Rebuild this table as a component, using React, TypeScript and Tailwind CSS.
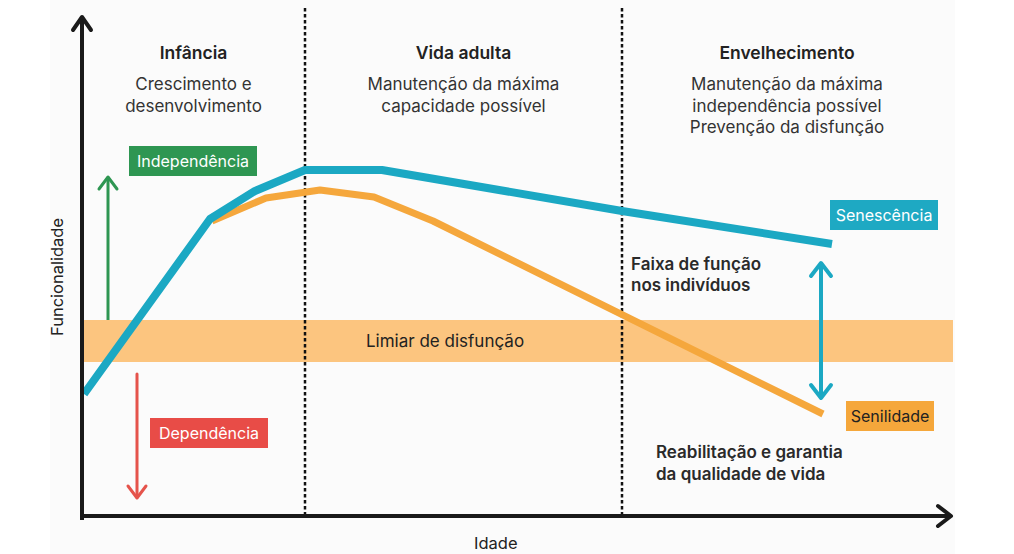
import React from 'react';

// Curva de funcionalidade ao longo da vida
const blueLine = '84,394 210,219 255,191 305,170 382,170 622,211 832,244';
const orangeLine = '212,221 266,198 320,190 374,197 433,221 823,414';

function Chart() {
  return (
    <svg className="absolute left-0 top-0" width={1014} height={554} viewBox="0 0 1014 554">
      {/* faixa limiar */}
      <rect x={84} y={320} width={869} height={42} fill="#fcc57f" />

      {/* linhas tracejadas */}
      <line x1={305} y1={8} x2={305} y2={516} stroke="#111" strokeWidth={2.5} strokeDasharray="3.5 2.5" />
      <line x1={622} y1={8} x2={622} y2={516} stroke="#111" strokeWidth={2.5} strokeDasharray="3.5 2.5" />

      {/* curvas */}
      <polyline points={orangeLine} fill="none" stroke="#f5a73c" strokeWidth={7} strokeLinejoin="round" />
      <polyline points={blueLine} fill="none" stroke="#1ba8c3" strokeWidth={8} strokeLinejoin="round" />

      {/* eixos */}
      <line x1={82} y1={18} x2={82} y2={520} stroke="#1a1a1a" strokeWidth={4} />
      <polyline points="73,30 82,17 91,30" fill="none" stroke="#1a1a1a" strokeWidth={4} strokeLinecap="round" strokeLinejoin="round" />
      <line x1={80} y1={516} x2={949} y2={516} stroke="#1a1a1a" strokeWidth={4} />
      <polyline points="938,506 951,516 938,526" fill="none" stroke="#1a1a1a" strokeWidth={4} strokeLinecap="round" strokeLinejoin="round" />

      {/* seta independência */}
      <line x1={108} y1={178} x2={108} y2={320} stroke="#2e9652" strokeWidth={3} />
      <polyline points="99,189 108,177 117,189" fill="none" stroke="#2e9652" strokeWidth={3} strokeLinecap="round" strokeLinejoin="round" />

      {/* seta dependência */}
      <line x1={137} y1={374} x2={137} y2={497} stroke="#e5534b" strokeWidth={3} strokeLinecap="round" />
      <polyline points="128,486 137,498 146,486" fill="none" stroke="#e5534b" strokeWidth={3} strokeLinecap="round" strokeLinejoin="round" />

      {/* seta dupla faixa de função */}
      <line x1={821} y1={265} x2={821} y2={395} stroke="#1ba8c3" strokeWidth={4} />
      <polyline points="811,276 821,263 831,276" fill="none" stroke="#1ba8c3" strokeWidth={4} strokeLinecap="round" strokeLinejoin="round" />
      <polyline points="811,385 821,398 831,385" fill="none" stroke="#1ba8c3" strokeWidth={4} strokeLinecap="round" strokeLinejoin="round" />
    </svg>
  );
}

function Tag({ className, children }: { className: string; children: React.ReactNode }) {
  return (
    <div className={`absolute flex items-center justify-center text-[16px] leading-none ${className}`}>
      {children}
    </div>
  );
}

function Phase({ title, lines }: { title: string; lines: string[] }) {
  return (
    <div>
      <h3 className="text-[17.5px] leading-[20px] font-semibold text-[#222]">{title}</h3>
      <p className="mt-[11px] text-[17px] leading-[21.5px] text-[#333]">
        {lines.map((l, i) => (
          <span key={i} className="block">{l}</span>
        ))}
      </p>
    </div>
  );
}

export default function App() {
  return (
    <div
      className="relative w-[1014px] h-[554px] bg-white overflow-hidden text-[#2a2a2a]"
      style={{ fontFamily: 'Inter, "Noto Sans", sans-serif' }}
    >
      <div className="absolute left-[50px] top-0 w-[905px] h-full bg-[#fbfbfb]" />
      <Chart />

      {/* fases */}
      <div className="relative grid grid-cols-[223px_317px_330px] pl-[82px] pt-[43px] text-center">
        <Phase title="Infância" lines={['Crescimento e', 'desenvolvimento']} />
        <Phase title="Vida adulta" lines={['Manutenção da máxima', 'capacidade possível']} />
        <Phase
          title="Envelhecimento"
          lines={['Manutenção da máxima', 'independência possível', 'Prevenção da disfunção']}
        />
      </div>

      <Tag className="left-[129px] top-[146px] w-[128px] h-[30px] bg-[#2e9652] text-white">Independência</Tag>
      <Tag className="left-[150px] top-[418px] w-[118px] h-[30px] bg-[#e84c47] text-white">Dependência</Tag>
      <Tag className="left-[830px] top-[200px] w-[108px] h-[30px] bg-[#1ea9c3] text-white">Senescência</Tag>
      <Tag className="left-[846px] top-[401px] w-[88px] h-[30px] bg-[#f5a73b] text-[#222]">Senilidade</Tag>

      <div className="absolute left-[366px] top-[331px] text-[17px] leading-[20px] text-[#222]">Limiar de disfunção</div>

      <div className="absolute left-[631px] top-[254px] text-[17px] leading-[21px] font-semibold text-[#2a2a2a]">
        Faixa de função<br />nos indivíduos
      </div>
      <div className="absolute left-[656px] top-[441px] text-[17px] leading-[22px] font-semibold text-[#2a2a2a]">
        Reabilitação e garantia<br />da qualidade de vida
      </div>

      <div className="absolute left-[474px] top-[533px] text-[16.5px] leading-[20px] text-[#222]">Idade</div>
      <div className="absolute left-[57px] top-[277px] -translate-x-1/2 -translate-y-1/2 -rotate-90 whitespace-nowrap text-[16.5px] leading-[18px] text-[#222]">
        Funcionalidade
      </div>
    </div>
  );
}
